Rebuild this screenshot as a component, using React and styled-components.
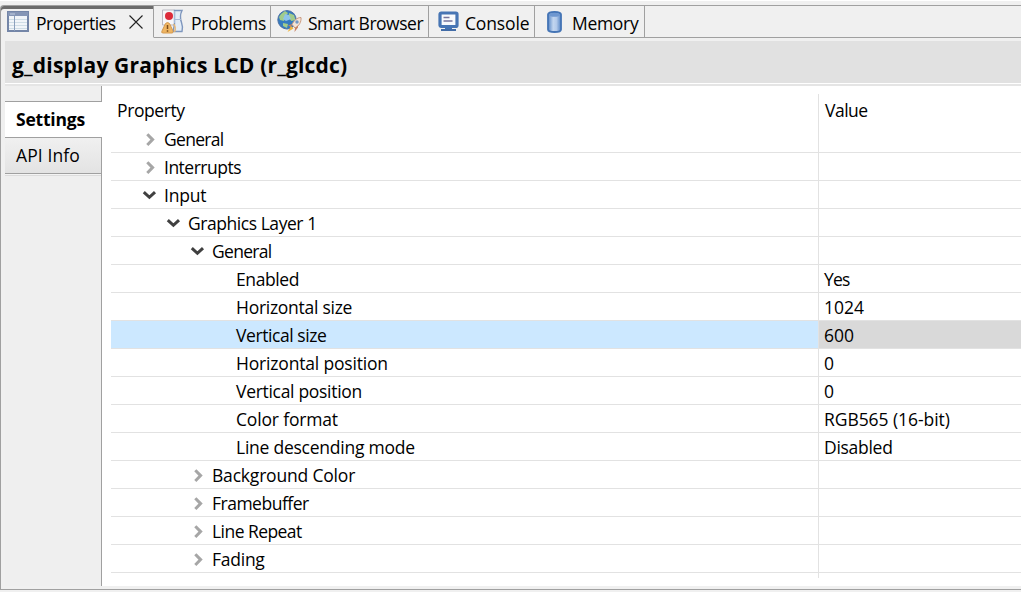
import React from 'react';
import styled, { createGlobalStyle, css } from 'styled-components';

const Global = createGlobalStyle`
  * { box-sizing: border-box; }
  body { margin: 0; background: #f0f0f0; overflow: hidden; }
  svg { display: block; flex: none; }
`;

const View = styled.div`
  width: 1021px;
  height: 592px;
  display: flex;
  flex-direction: column;
  font: 17.5px/28px "Open Sans", "Noto Sans", sans-serif;
  color: #000;
  background: #f0f0f0;
  border-top: 1px solid #fff;
  padding-top: 4px;
`;

const Frame = styled.div`
  height: 585px;
  display: flex;
  flex-direction: column;
  border-left: 1px solid #a0a0a0;
  border-bottom: 1px solid #a0a0a0;
  border-top: 1px solid #a0a0a0;
  border-top-left-radius: 4px;
`;

const TabBar = styled.div`
  height: 32px;
  flex: none;
  display: flex;
`;

const Tab = styled.div`
  width: ${p => p.$w}px;
  display: flex;
  align-items: center;
  padding: 0 0 0 ${p => p.$pad}px;
  gap: ${p => p.$gap}px;
  border-right: 1px solid #a0a0a0;
  border-bottom: 1px solid ${p => (p.$active ? 'transparent' : '#a0a0a0')};
  ${p => p.$active && css`
    box-shadow: inset 0 3px 0 #6b6b6b;
    border-top-left-radius: 3px;
  `}

  > span { padding-top: 3px; }
`;

const TabFill = styled.div`
  flex: 1;
  border-bottom: 1px solid #a0a0a0;
`;

const CloseButton = styled.button`
  margin-left: 6px;
  padding: 0;
  border: 0;
  background: none;
`;

const Label = styled.span`
  white-space: nowrap;
  font-weight: ${p => (p.$bold ? 700 : 400)};
  font-size: ${p => p.$size || 17.5}px;
  letter-spacing: ${p => p.$ls || 0}px;
`;

const Title = styled.h1`
  margin: 3px 0 0 4px;
  height: 42px;
  flex: none;
  display: flex;
  align-items: center;
  padding: 6px 0 0 7px;
  background: #e1e1e1;
  font-size: inherit;
`;

const Rule = styled.div`
  height: 3px;
  flex: none;
  margin-left: 4px;
  border-top: 1px solid #fff;
  background: #e5e5e5;
`;

const Body = styled.div`
  flex: none;
  height: 500px;
  margin-left: 4px;
  display: flex;
`;

const Sidebar = styled.nav`
  width: 97px;
  display: flex;
  flex-direction: column;
`;

const SideSpace = styled.div`
  height: 15px;
  background: #efefef;
  border-right: 1px solid #a0a0a0;
`;

const SideTab = styled.div`
  height: 36px;
  display: flex;
  align-items: center;
  padding: 0 0 2px 11px;
  border-top: 1px solid #a0a0a0;
  ${p => (p.$selected
    ? css`background: #fff;`
    : css`
      height: 37px;
      border-right: 1px solid #a0a0a0;
      border-bottom: 1px solid #a0a0a0;
      background: linear-gradient(#f0f0f0, #e3e3e3);
    `)}
`;

const SideRest = styled.div`
  flex: 1;
  background: #efefef;
  border-right: 1px solid #a0a0a0;
  box-shadow: inset 0 1px 0 #f4f4f4, inset 0 2px 0 #dcdcdc;
`;

const Panel = styled.div`
  flex: 1;
  background: #fff;
  padding: 8px 0 0 9px;
`;

const Table = styled.div`
  height: 484px;
  display: grid;
  grid-template-columns: 708px 1fr;
  grid-template-rows: 31px repeat(16, 28px) 5px;
`;

const Cell = styled.div`
  display: flex;
  align-items: center;
  border-bottom: ${p => (p.$plain ? 0 : 1)}px solid #e2e2e2;
  background: ${p => p.$bg || 'transparent'};

  > span { padding-top: 1px; }
`;

const NameCell = styled(Cell)`
  padding-left: ${p => p.$indent}px;
  border-right: 1px solid #e2e2e2;
`;

const ValueCell = styled(Cell)`
  padding-left: ${p => (p.$plain ? 6 : 5)}px;
`;

const Twistie = styled.div`
  width: 24px;
  margin-left: -24px;
  padding-left: 1px;
  display: flex;
  align-items: center;
`;

const Chevron = ({ open }) => (
  <Twistie>
    <svg width="17" height="17" viewBox="0 0 17 17" fill="none" strokeWidth="3">
      {open
        ? <path d="M2.8 6.1l5.6 5.2 5.6-5.2" stroke="#404040" />
        : <path d="M6.3 4.2l5.3 5.4-5.3 5.4" stroke="#a6a6a6" />}
    </svg>
  </Twistie>
);

const PropertiesIcon = () => (
  <svg width="22" height="21" viewBox="0 0 22 21">
    <rect x="1" y="1" width="20" height="19" fill="#f1f5f9" stroke="#7486a8" strokeWidth="2" />
    <rect x="1" y="1" width="20" height="4" fill="#8596b6" />
    <path d="M3 3h5" stroke="#c3cfe2" />
    <path d="M2 8.5h18M2 11.5h18M2 14.5h18M2 17.5h18" stroke="#cfdde6" />
    <path d="M7.5 5v15" stroke="#8ba0bd" />
  </svg>
);

const ProblemsIcon = () => (
  <svg width="23" height="25" viewBox="0 0 23 25">
    <path d="M1.5 1h12v15h-12z" fill="#f7f6f8" stroke="#b9b9c2" />
    <path d="M13.5 1.5h7.5c-2 4-2 8-.5 12 1.5 4 1 7 .5 9h-9l1.5-7z" fill="#e4edf7" stroke="#7e96bd" strokeWidth="1.4" />
    <path d="M13.5 2v12M13 10.5h7" stroke="#a7bbd6" />
    <circle cx="8" cy="7" r="4" fill="#dc2b3a" />
    <path d="M4.5 14.5q2-2 4 0L12 22q.5 2-1 2H2q-2 0-1-2z" fill="#efb562" stroke="#d49a50" strokeLinejoin="round" />
    <path d="M6.5 16v4M6.5 21.3v1.5" stroke="#7b4c1a" strokeWidth="1.5" />
    <path d="M12.5 15q3 3 1 8" stroke="#e6b878" strokeWidth="1.4" fill="none" />
  </svg>
);

const BrowserIcon = () => (
  <svg width="25" height="24" viewBox="0 0 25 24">
    <circle cx="10" cy="9.8" r="9.2" fill="#347bc0" stroke="#4a6fa3" />
    <path d="M4 4l4-3 3 2-3 4-1 4-4-1-1-3zM12 3l5 2 1.5 5-4 1-3-3zM6 13l5 1-1 4-4-2z" fill="#a2cc8b" />
    <path d="M8 4l4 1 2 4-5 2-3-2z" fill="#8ec3ea" />
    <path d="M24 7.5c-4 0-7 3-9 7l3 3.5c4-2 6.5-6 6-10.5z" fill="#f3e3d6" stroke="#c99a80" />
    <circle cx="20" cy="12" r="1.7" fill="#7197c4" />
    <path d="M15 14l-4 1.5 3 1.5zM18 18l-.5 4 3.5-4.5v-2z" fill="#c88161" />
    <path d="M14 16l-3.5 6 6-3.5z" fill="#f0b63f" />
  </svg>
);

const ConsoleIcon = () => (
  <svg width="21" height="21" viewBox="0 0 21 21">
    <rect x="2" y="2" width="17" height="13.5" rx="1.2" fill="#f8fafd" stroke="#4775b4" strokeWidth="3.2" />
    <path d="M5.5 6.5h6M5.5 10h9" stroke="#76749b" strokeWidth="1.3" />
    <path d="M7 16h7v2H7z" fill="#4474b5" />
    <path d="M3 18h15v2H3z" fill="#426ca7" />
  </svg>
);

const MemoryIcon = () => (
  <svg width="15" height="22" viewBox="0 0 15 22">
    <defs>
      <linearGradient id="mem">
        <stop offset="0" stopColor="#5584c4" />
        <stop offset=".4" stopColor="#c3d6ef" />
        <stop offset=".65" stopColor="#b3caea" />
        <stop offset="1" stopColor="#5584c4" />
      </linearGradient>
    </defs>
    <path d="M1 3.6q0-2.6 6.5-2.6t6.5 2.6v14.8q0 2.6-6.5 2.6t-6.5-2.6z" fill="url(#mem)" stroke="#4474b5" strokeWidth="1.8" />
    <ellipse cx="7.5" cy="3.8" rx="5.6" ry="2" fill="#6e97d0" />
  </svg>
);

const CloseIcon = () => (
  <svg width="14" height="14" viewBox="0 0 14 14">
    <path d="M.5.5l13 13M13.5.5l-13 13" stroke="#222" strokeWidth="1.1" />
  </svg>
);

const rows = [
  ['General', -0.7, 1, 'closed'],
  ['Interrupts', -0.5, 1, 'closed'],
  ['Input', -0.2, 1, 'open'],
  ['Graphics Layer 1', -0.45, 2, 'open'],
  ['General', -0.7, 3, 'open'],
  ['Enabled', -0.4, 4, '', 'Yes', -0.8],
  ['Horizontal size', -0.27, 4, '', '1024', 0],
  ['Vertical size', -0.42, 4, '', '600', 0, true],
  ['Horizontal position', -0.18, 4, '', '0', 0],
  ['Vertical position', -0.3, 4, '', '0', 0],
  ['Color format', -0.17, 4, '', 'RGB565 (16-bit)', -0.06],
  ['Line descending mode', -0.24, 4, '', 'Disabled', -0.28],
  ['Background Color', -0.19, 3, 'closed'],
  ['Framebuffer', -0.5, 3, 'closed'],
  ['Line Repeat', -0.55, 3, 'closed'],
  ['Fading', -0.25, 3, 'closed'],
];

export default function App() {
  return (
    <View>
      <Global />
      <Frame>
        <TabBar>
          <Tab $active $w={153} $pad={6} $gap={7}>
            <PropertiesIcon /><Label $ls={-0.5}>Properties</Label>
            <CloseButton aria-label="Close"><CloseIcon /></CloseButton>
          </Tab>
          <Tab $w={117} $pad={7} $gap={7}><ProblemsIcon /><Label $ls={-0.35}>Problems</Label></Tab>
          <Tab $w={158} $pad={6} $gap={6}><BrowserIcon /><Label $ls={-0.48}>Smart Browser</Label></Tab>
          <Tab $w={106} $pad={9} $gap={6}><ConsoleIcon /><Label $ls={-0.15}>Console</Label></Tab>
          <Tab $w={110} $pad={12} $gap={10}><MemoryIcon /><Label $ls={-0.3}>Memory</Label></Tab>
          <TabFill />
        </TabBar>
        <Title><Label $bold $size={21} $ls={0.17}>g_display Graphics LCD (r_glcdc)</Label></Title>
        <Rule />
        <Body>
          <Sidebar>
            <SideSpace />
            <SideTab $selected><Label $bold $ls={-0.2}>Settings</Label></SideTab>
            <SideTab><Label $ls={0.1}>API Info</Label></SideTab>
            <SideRest />
          </Sidebar>
          <Panel>
            <Table>
              <NameCell $plain $indent={6}><Label $ls={-0.4}>Property</Label></NameCell>
              <ValueCell $plain><Label $ls={-0.5}>Value</Label></ValueCell>
              {rows.map(([name, ls, level, state, value, valueLs, selected], i) => (
                <React.Fragment key={i}>
                  <NameCell $indent={29 + level * 24} $bg={selected && '#cce8ff'}>
                    {state && <Chevron open={state === 'open'} />}
                    <Label $ls={ls}>{name}</Label>
                  </NameCell>
                  <ValueCell $bg={selected && '#d9d9d9'}><Label $ls={valueLs}>{value}</Label></ValueCell>
                </React.Fragment>
              ))}
              <NameCell $plain $indent={0} />
            </Table>
          </Panel>
        </Body>
      </Frame>
    </View>
  );
}
